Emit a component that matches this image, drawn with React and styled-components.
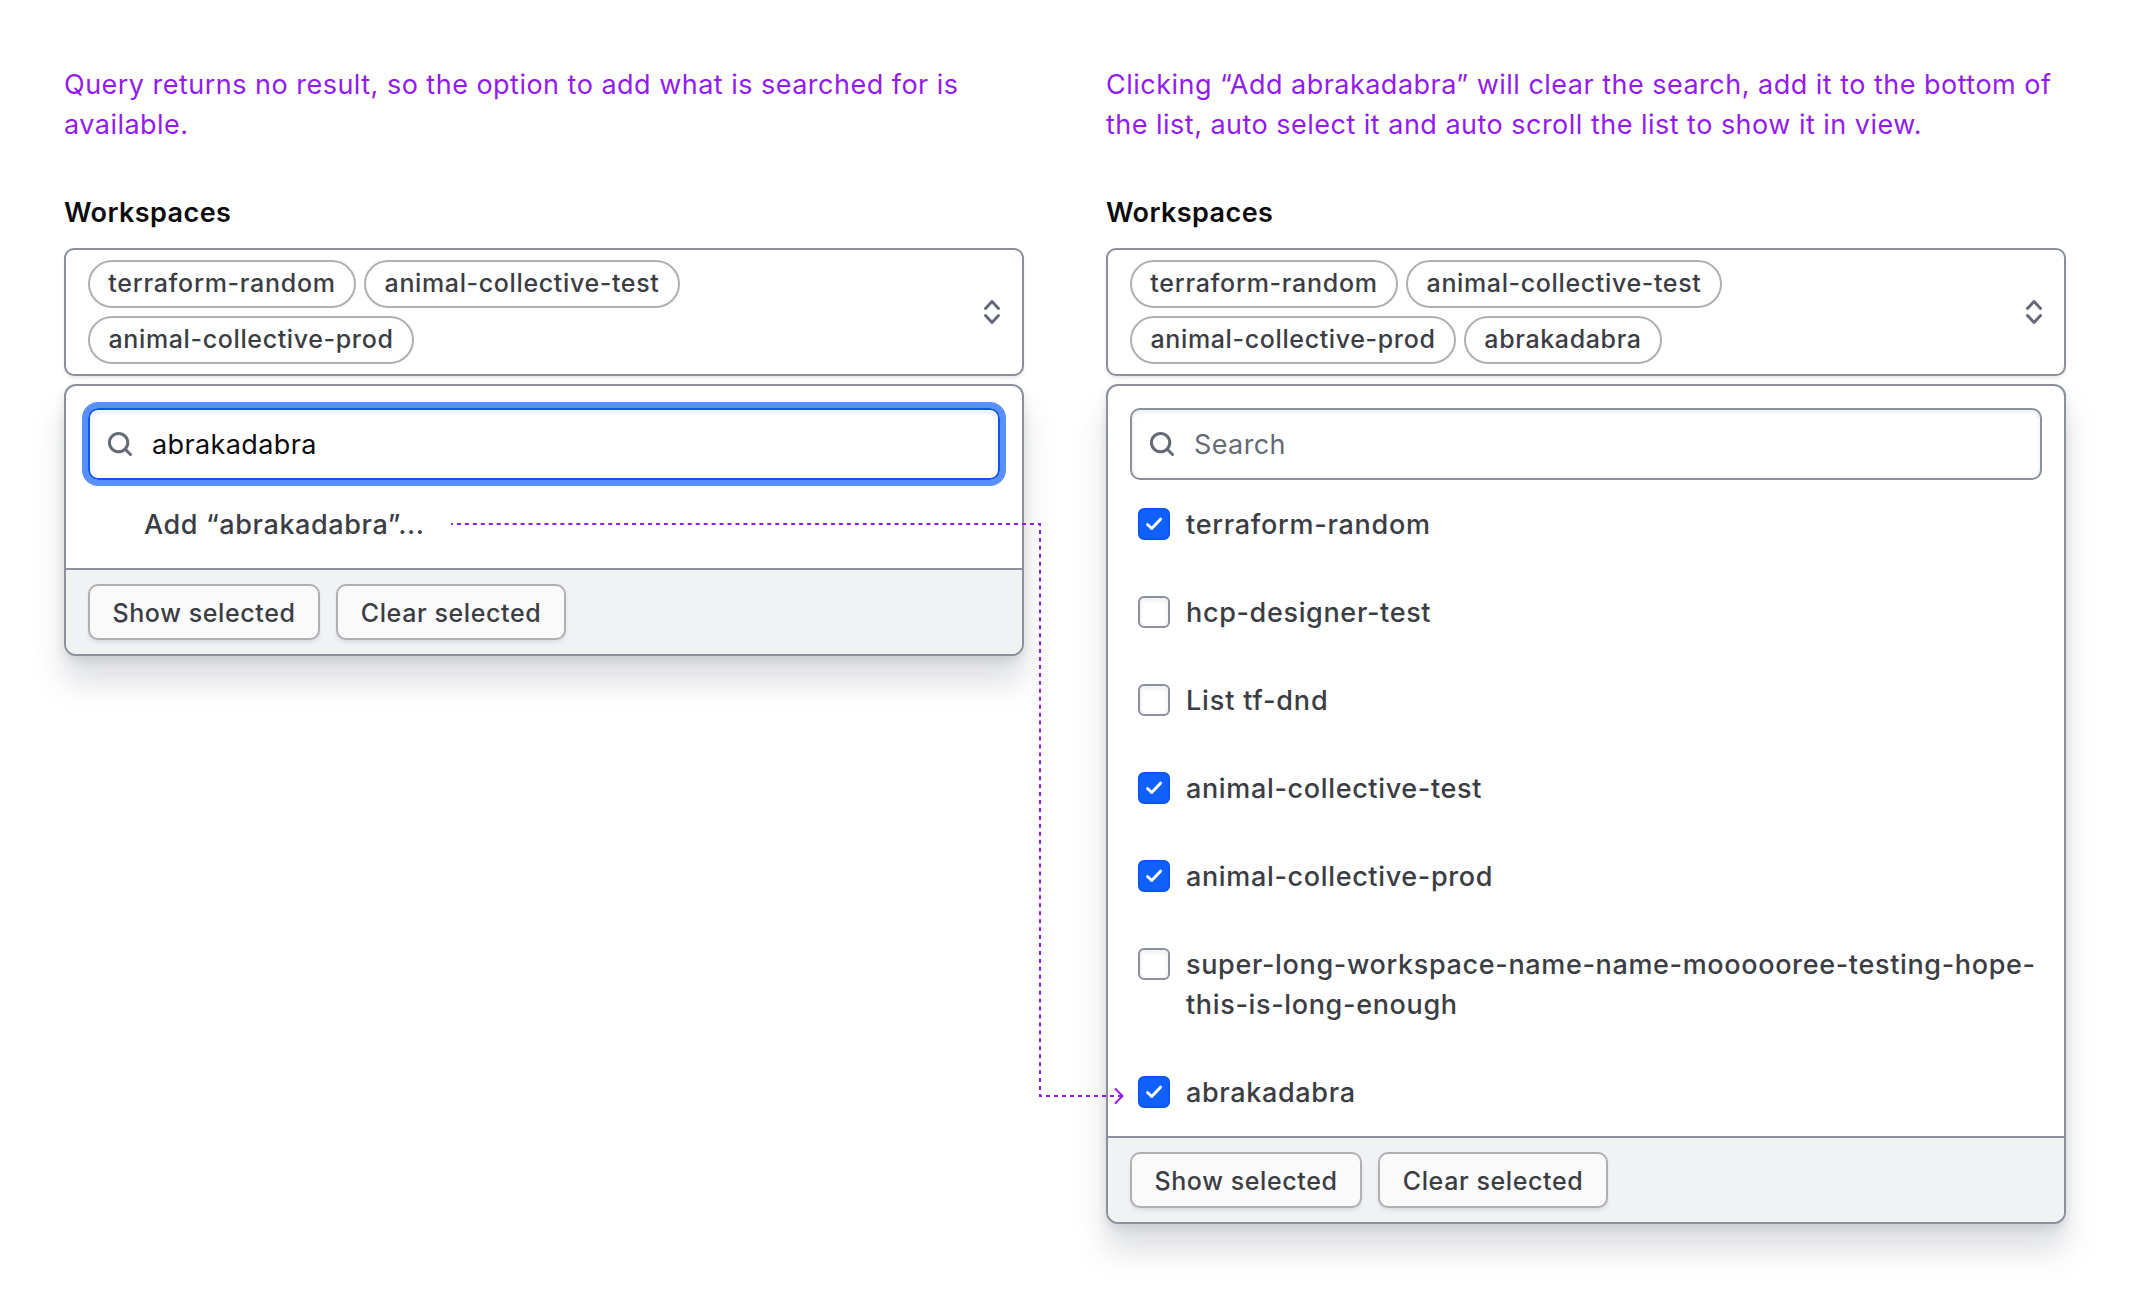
import React from "react";
import styled, { createGlobalStyle } from "styled-components";

const GlobalStyle = createGlobalStyle`
  *, *::before, *::after { box-sizing: border-box; }
  body {
    margin: 0;
    background: #fff;
    font-family: Inter, "Liberation Sans", sans-serif;
    font-feature-settings: "calt" 0;
  }
`;

const Board = styled.main`
  position: relative;
  width: 2130px;
  height: 1304px;
  padding: 65px 64px 64px;
  display: flex;
  align-items: flex-start;
  gap: 82px;
  background: #fff;
`;

const Column = styled.section`
  width: 960px;
  display: flex;
  flex-direction: column;
`;

const Note = styled.p`
  margin: 0;
  font-size: 27px;
  line-height: 40px;
  letter-spacing: 0.48px;
  white-space: nowrap;
  color: #911ced;
`;

const Label = styled.h2`
  margin: 48px 0 15px;
  font-size: 27px;
  font-weight: 600;
  line-height: 40px;
  letter-spacing: 0.42px;
  color: #0c0c0e;
`;

const SelectBox = styled.div`
  height: 128px;
  padding: 10px 14px 10px 22px;
  display: flex;
  align-items: center;
  justify-content: space-between;
  border: 2px solid #8c909c;
  border-radius: 10px;
  background: #fff;
  box-shadow: 0 2px 2px rgba(101, 106, 118, 0.08), 0 4px 4px rgba(101, 106, 118, 0.06);
`;

const Chips = styled.div`
  width: 700px;
  display: flex;
  flex-wrap: wrap;
  gap: 8px;
`;

const Chip = styled.span`
  width: ${(p) => p.$width}px;
  height: 48px;
  padding-bottom: 3px;
  display: flex;
  align-items: center;
  justify-content: center;
  border: 2px solid #b0b0b4;
  border-radius: 24px;
  font-size: 25px;
  font-weight: 500;
  line-height: 40px;
  letter-spacing: ${(p) => p.$spacing ?? 0.63}px;
  color: #3b3d45;
`;

const Dropdown = styled.div`
  margin-top: 8px;
  border: 2px solid #8c909c;
  border-radius: 12px;
  background: #fff;
  box-shadow: 0 4px 8px rgba(101, 106, 118, 0.17), 0 26px 30px rgba(101, 106, 118, 0.22);
`;

const SearchField = styled.div`
  height: 72px;
  margin: 22px 22px 0;
  padding: 0 16px;
  display: flex;
  align-items: center;
  gap: 14px;
  border: 2px solid ${(p) => (p.$focused ? "#0c56e9" : "#8c909c")};
  border-radius: 10px;
  font-size: 27px;
  letter-spacing: 0.38px;
  color: ${(p) => (p.$focused ? "#0c0c0e" : "#656a76")};
  box-shadow: inset 0 2px 4px 1px rgba(101, 106, 118, 0.1)${(p) => (p.$focused ? ", 0 0 0 6px #5990ff" : "")};
`;

const Options = styled.div`
  padding: 24px 22px 24px 30px;
  display: flex;
  flex-direction: column;
  gap: 48px;
`;

const Option = styled.div`
  display: flex;
  align-items: flex-start;
  gap: 16px;
  padding-left: ${(p) => (p.$indent ? 48 : 0)}px;
`;

const OptionText = styled.span`
  margin: 1px 0 -1px;
  font-size: 27px;
  font-weight: 500;
  line-height: 40px;
  letter-spacing: ${(p) => p.$spacing ?? 0.65}px;
  white-space: nowrap;
  color: #3b3d45;
`;

const CheckSquare = styled.span`
  width: 32px;
  height: 32px;
  margin-top: 4px;
  flex: none;
  display: block;
  border: 2px solid ${(p) => (p.$checked ? "#0c56e9" : "#8c909c")};
  border-radius: 6px;
  background: ${(p) => (p.$checked ? "#1060ff" : "#fff")};
  box-shadow: ${(p) => (p.$checked ? "none" : "inset 0 2px 4px 1px rgba(101, 106, 118, 0.1)")};
  svg { display: block; }
`;

const Footer = styled.footer`
  height: 86px;
  padding: 14px 22px;
  display: flex;
  gap: 16px;
  border-top: 2px solid #8c909c;
  border-radius: 0 0 10px 10px;
  background: #f1f2f3;
`;

const Button = styled.button`
  width: ${(p) => p.$width}px;
  height: 56px;
  padding: 1px 0 0;
  border: 2px solid #b0b0b4;
  border-radius: 10px;
  background: #fafafa;
  box-shadow: 0 2px 2px rgba(101, 106, 118, 0.08), 0 4px 4px rgba(101, 106, 118, 0.06);
  font-family: inherit;
  font-size: 25px;
  font-weight: 500;
  letter-spacing: 0.6px;
  color: #3b3d45;
`;

const Connector = styled.svg`
  position: absolute;
  left: 0;
  top: 0;
  pointer-events: none;
`;

const SortIcon = () => (
  <svg width="32" height="32" viewBox="0 0 32 32" fill="none" stroke="#656a76" strokeWidth="3" strokeLinecap="round" strokeLinejoin="round">
    <path d="M9.5 12.5 16 5.5l6.500 7M9.500 19.500l6.500 7 6.500-7" />
  </svg>
);

const SearchIcon = () => (
  <svg width="32" height="32" viewBox="0 0 32 32" fill="none" stroke="#656a76" strokeWidth="3" strokeLinecap="round">
    <circle cx="12.600" cy="14.600" r="9.200" />
    <path d="m19.500 21.500 5 5" />
  </svg>
);

const CheckIcon = () => (
  <svg width="28" height="28" viewBox="0 0 28 28" fill="none" stroke="#fff" strokeWidth="3" strokeLinecap="round" strokeLinejoin="round">
    <path d="m7.500 14.500 4.250 4L20.500 9.200" />
  </svg>
);

const baseChips = [
  { text: "terraform-random", width: 268, spacing: 0.72 },
  { text: "animal-collective-test", width: 316 },
  { text: "animal-collective-prod", width: 326 },
];

const options = [
  { lines: ["terraform-random"], checked: true, spacing: 0.72 },
  { lines: ["hcp-designer-test"] },
  { lines: ["List tf-dnd"], spacing: 0.85 },
  { lines: ["animal-collective-test"], checked: true },
  { lines: ["animal-collective-prod"], checked: true },
  { lines: ["super-long-workspace-name-name-moooooree-testing-hope-", "this-is-long-enough"] },
  { lines: ["abrakadabra"], checked: true },
];

function Lines({ lines }) {
  return lines.map((line, i) => (
    <React.Fragment key={line}>
      {i > 0 && <br />}
      {line}
    </React.Fragment>
  ));
}

function WorkspaceSelect({ note, chips, query, children }) {
  return (
    <Column>
      <Note><Lines lines={note} /></Note>
      <Label>Workspaces</Label>
      <SelectBox>
        <Chips>
          {chips.map((c) => (
            <Chip key={c.text} $width={c.width} $spacing={c.spacing}>{c.text}</Chip>
          ))}
        </Chips>
        <SortIcon />
      </SelectBox>
      <Dropdown>
        <SearchField $focused={Boolean(query)}>
          <SearchIcon />
          <span>{query || "Search"}</span>
        </SearchField>
        <Options>{children}</Options>
        <Footer>
          <Button $width={232}>Show selected</Button>
          <Button $width={230}>Clear selected</Button>
        </Footer>
      </Dropdown>
    </Column>
  );
}

export default function App() {
  return (
    <>
      <GlobalStyle />
      <Board>
        <WorkspaceSelect
          note={["Query returns no result, so the option to add what is searched for is", "available."]}
          chips={baseChips}
          query="abrakadabra"
        >
          <Option $indent><OptionText $spacing={0.6}>Add “abrakadabra”...</OptionText></Option>
        </WorkspaceSelect>
        <WorkspaceSelect
          note={["Clicking “Add abrakadabra” will clear the search, add it to the bottom of", "the list, auto select it and auto scroll the list to show it in view."]}
          chips={[...baseChips, { text: "abrakadabra", width: 198 }]}
        >
          {options.map((o) => (
            <Option key={o.lines[0]}>
              <CheckSquare $checked={o.checked}>{o.checked && <CheckIcon />}</CheckSquare>
              <OptionText $spacing={o.spacing}><Lines lines={o.lines} /></OptionText>
            </Option>
          ))}
        </WorkspaceSelect>
        <Connector width="2130" height="1304" fill="none" stroke="#911ced" strokeWidth="2">
          <path d="M451 524H1041" strokeDasharray="3.979" strokeDashoffset="2" />
          <path d="M1040 523V1097" strokeDasharray="3.972" strokeDashoffset="1" />
          <path d="M1039 1096h84" strokeDasharray="4" strokeDashoffset="1" />
          <path d="m1115.500 1089 7 7-7 7" strokeLinecap="round" />
        </Connector>
      </Board>
    </>
  );
}
